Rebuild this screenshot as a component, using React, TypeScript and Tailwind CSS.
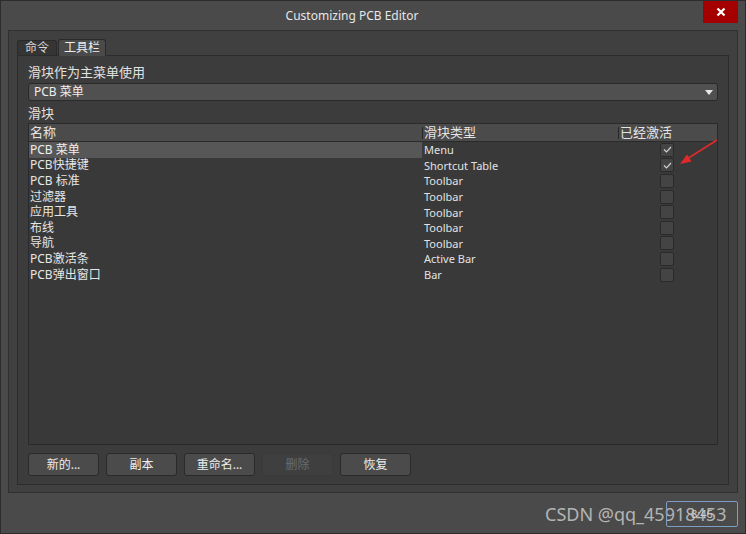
import React from "react";

const rows: { name: string; type: string; on: boolean }[] = [
  { name: "PCB 菜单", type: "Menu", on: true },
  { name: "PCB快捷键", type: "Shortcut Table", on: true },
  { name: "PCB 标准", type: "Toolbar", on: false },
  { name: "过滤器", type: "Toolbar", on: false },
  { name: "应用工具", type: "Toolbar", on: false },
  { name: "布线", type: "Toolbar", on: false },
  { name: "导航", type: "Toolbar", on: false },
  { name: "PCB激活条", type: "Active Bar", on: false },
  { name: "PCB弹出窗口", type: "Bar", on: false },
];

function Check({ on }: { on: boolean }) {
  return (
    <div className="w-[14px] h-[14px] rounded-[2px] bg-[#444444] border border-[#2a2a2a] flex items-center justify-center">
      {on && (
        <svg width="9" height="7" viewBox="0 0 9 7">
          <path d="M1 3.5 L3.5 6 L8 1" fill="none" stroke="#d0d0d0" strokeWidth="1.2" />
        </svg>
      )}
    </div>
  );
}

function Btn({ label, disabled }: { label: string; disabled?: boolean }) {
  return (
    <div
      className={
        disabled
          ? "w-[71px] h-[23px] rounded-[3px] bg-[#3f3f3f] border border-[#3a3a3a] flex items-center justify-center text-[12px] text-[#6c6c6c]"
          : "w-[71px] h-[23px] rounded-[3px] bg-[#4b4b4b] border border-[#2a2a2a] flex items-center justify-center text-[12px] text-[#ececec]"
      }
    >
      {label}
    </div>
  );
}

export default function App() {
  return (
    <div className="relative w-[746px] h-[534px] bg-[#4a4a4a] border border-[#2c2c2c] flex flex-col font-['Noto_Sans','Noto_Sans_CJK_SC',sans-serif] text-[#e4e4e4] overflow-hidden">
      {/* title bar */}
      <div className="h-[29px] flex items-center justify-center pr-[42px] text-[12px] text-[#e6e6e6]">
        Customizing PCB Editor
      </div>
      <div className="absolute right-[7px] top-0 w-[35px] h-[22px] bg-[#a50000] flex items-center justify-center">
        <svg width="10" height="10" viewBox="0 0 10 10">
          <path d="M1.5 1.5 L8.5 8.5 M8.5 1.5 L1.5 8.5" stroke="#ffffff" strokeWidth="2.2" />
        </svg>
      </div>

      {/* outer panel */}
      <div className="mx-[7px] h-[463px] border border-[#303030] bg-[#404040] pt-[8px] px-[8px] pb-[7px] flex flex-col">
        {/* tabs */}
        <div className="flex gap-[1px] h-[16px] items-end">
          <div className="w-[40px] h-[15px] bg-[#353535] border border-[#2a2a2a] border-b-0 rounded-t-[3px] flex items-center justify-center text-[12px] text-[#d8d8d8] leading-none">
            命令
          </div>
          <div className="w-[48px] h-[17px] bg-[#4a4a4a] border border-[#2a2a2a] border-b-0 rounded-t-[3px] flex items-center justify-center text-[12px] text-[#eeeeee] leading-none relative top-[1px]">
            工具栏
          </div>
        </div>

        {/* content panel */}
        <div className="flex-1 border border-[#2c2c2c] bg-[#3c3c3c] px-[10px] pt-[6px] pb-[8px] flex flex-col">
          <div className="h-[20px] leading-[20px] text-[13px] text-[#e2e2e2]">滑块作为主菜单使用</div>
          <div className="mt-[1px] h-[18px] rounded-[3px] border border-[#2a2a2a] bg-[#505050] flex items-center justify-between pl-[5px] pr-[4px] text-[12px] text-[#eeeeee]">
            <span>PCB 菜单</span>
            <svg width="8" height="5" viewBox="0 0 8 5">
              <path d="M0 0 L8 0 L4 5 Z" fill="#e8e8e8" />
            </svg>
          </div>
          <div className="mt-[2px] h-[20px] leading-[20px] text-[13px] text-[#e2e2e2]">滑块</div>

          {/* table */}
          <div className="h-[322px] border border-[#2a2a2a] bg-[#393939] flex flex-col">
            <div className="h-[18px] bg-[#4b4b4b] border-b border-[#2a2a2a] flex items-center text-[13px] text-[#e4e4e4]">
              <div className="w-[393px] pl-[1px] leading-none">名称</div>
              <div className="w-[196px] flex items-center leading-none">
                <span className="w-[1px] h-[12px] bg-[#262626] mr-[1px]" />
                滑块类型
              </div>
              <div className="flex-1 flex items-center leading-none">
                <span className="w-[1px] h-[12px] bg-[#262626] mr-[1px]" />
                已经激活
              </div>
            </div>
            {rows.map((r, i) => (
              <div key={i} className="h-[15.6px] flex items-center">
                <div
                  className={
                    i === 0
                      ? "w-[393px] h-full bg-[#575757] pl-[1px] flex items-center text-[12px] text-[#eeeeee] leading-none"
                      : "w-[393px] h-full pl-[1px] flex items-center text-[12px] text-[#e6e6e6] leading-none"
                  }
                >
                  {r.name}
                </div>
                <div className="w-[196px] pl-[2px] text-[11px] text-[#e2e2e2] leading-none">{r.type}</div>
                <div className="flex-1 pl-[42px] flex items-center">
                  <Check on={r.on} />
                </div>
              </div>
            ))}
          </div>

          {/* buttons */}
          <div className="mt-[8px] flex gap-[7px]">
            <Btn label="新的..." />
            <Btn label="副本" />
            <Btn label="重命名..." />
            <Btn label="删除" disabled />
            <Btn label="恢复" />
          </div>
        </div>
      </div>

      {/* red annotation arrow */}
      <svg className="absolute left-0 top-0 pointer-events-none" width="746" height="534" viewBox="0 0 746 534">
        <line x1="716" y1="139" x2="686" y2="158" stroke="#e02a2a" strokeWidth="1.6" />
        <polygon points="679,163 686,153.5 690.6,160.5" fill="#e02a2a" />
      </svg>

      {/* watermark */}
      <div className="absolute left-[544px] top-[500px] text-[18px] text-[#b4b4b4] font-['Noto_Sans',sans-serif] leading-[26px]">
        CSDN @qq_45918453
      </div>
      <div className="absolute left-[665px] top-[500px] w-[72px] h-[26px] border border-[#7c9ec4] rounded-[2px] flex items-center pl-[24px] text-[11px] text-[#cfcfcf]">
        8:46
      </div>
    </div>
  );
}
